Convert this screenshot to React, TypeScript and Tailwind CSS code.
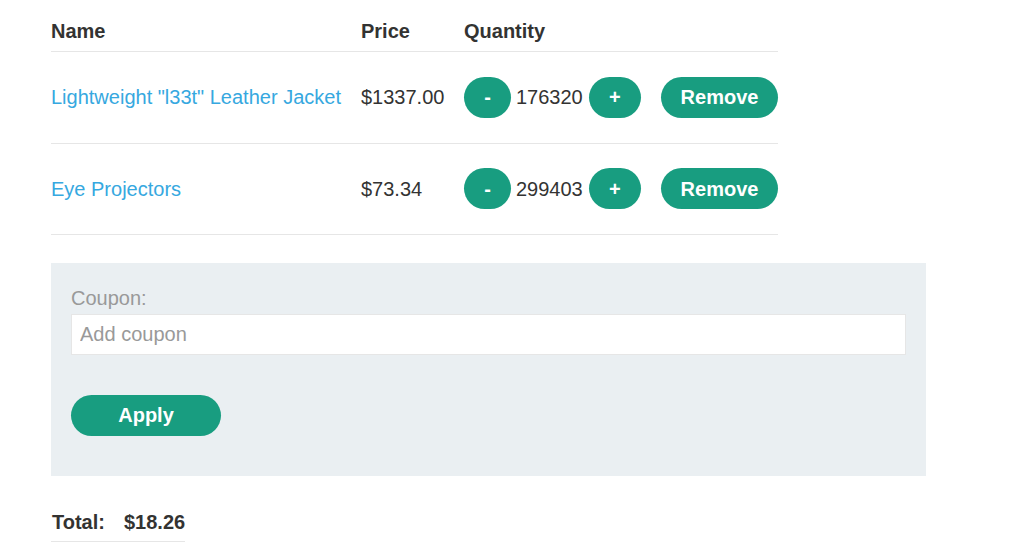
import { useState } from "react";

type Item = { id: number; name: string; price: string; qty: number };

const initialItems: Item[] = [
  { id: 1, name: 'Lightweight "l33t" Leather Jacket', price: "$1337.00", qty: 176320 },
  { id: 2, name: "Eye Projectors", price: "$73.34", qty: 299403 },
];

const pill =
  "h-[41px] rounded-full bg-[#189d80] text-white font-bold text-[20px] leading-none";

export default function App() {
  const [items, setItems] = useState<Item[]>(initialItems);
  const [coupon, setCoupon] = useState("");

  const changeQty = (id: number, delta: number) =>
    setItems((prev) =>
      prev.map((it) => (it.id === id ? { ...it, qty: Math.max(0, it.qty + delta) } : it))
    );

  const remove = (id: number) => setItems((prev) => prev.filter((it) => it.id !== id));

  return (
    <div
      className="min-h-screen bg-white text-[#333332] text-[20px] pl-[51px] pt-[12px]"
      style={{ fontFamily: '"Liberation Sans", Arial, sans-serif' }}
    >
      {/* Cart items */}
      <table className="border-collapse w-[727px]">
        <thead>
          <tr className="border-b border-[#e6e6e6]">
            <th className="w-[310px] h-[39px] text-left font-bold p-0">Name</th>
            <th className="w-[103px] text-left font-bold p-0">Price</th>
            <th className="w-[197px] text-left font-bold p-0">Quantity</th>
            <th className="p-0"></th>
          </tr>
        </thead>
        <tbody>
          {items.map((it, i) => (
            <tr key={it.id} className="border-b border-[#e6e6e6]">
              <td className={`${i === 0 ? "h-[92px]" : "h-[91px]"} p-0 align-middle`}>
                <a href="#" className="text-[#36a8e0]">
                  {it.name}
                </a>
              </td>
              <td className="p-0 align-middle">{it.price}</td>
              <td className="p-0 align-middle">
                <div className="flex items-center">
                  <button onClick={() => changeQty(it.id, -1)} className={`${pill} w-[47px]`}>
                    -
                  </button>
                  <span className="ml-[5px] mr-[6px]">{it.qty}</span>
                  <button onClick={() => changeQty(it.id, 1)} className={`${pill} w-[52px]`}>
                    +
                  </button>
                </div>
              </td>
              <td className="p-0 align-middle">
                <button onClick={() => remove(it.id)} className={`${pill} w-[117px]`}>
                  Remove
                </button>
              </td>
            </tr>
          ))}
        </tbody>
      </table>

      {/* Coupon */}
      <div className="mt-[28px] w-[875px] bg-[#eaeff2] px-[20px] pt-[22px] pb-[40px]">
        <label className="block text-[#999999] leading-[26px]">Coupon:</label>
        <input
          value={coupon}
          onChange={(e) => setCoupon(e.target.value)}
          placeholder="Add coupon"
          className="mt-[3px] block w-full h-[41px] bg-white border border-[#e6e6e6] px-[8px] text-[20px] outline-none placeholder:text-[#999999]"
        />
        <button className={`${pill} w-[150px] mt-[40px] block`}>Apply</button>
      </div>

      {/* Total */}
      <table className="border-collapse mt-[28px]">
        <tbody>
          <tr className="border-b border-[#e6e6e6]">
            <th className="h-[38px] p-0 pl-[1px] pr-[19px] text-left font-bold">Total:</th>
            <th className="p-0 text-left font-bold">$18.26</th>
          </tr>
        </tbody>
      </table>
    </div>
  );
}
